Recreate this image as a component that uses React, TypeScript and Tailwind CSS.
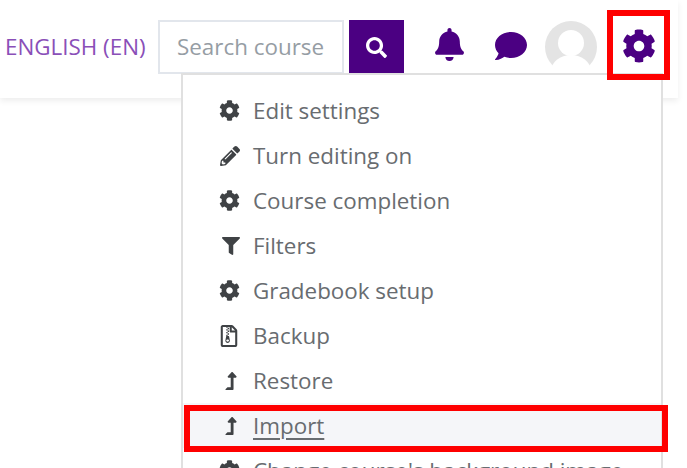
import React from "react";
import { FaBell, FaCog, FaComment, FaFilter, FaLevelUpAlt, FaPencilAlt, FaRegFileArchive, FaSearch } from "react-icons/fa";

const items = [
  { label: "Edit settings", icon: <FaCog size={21} /> },
  { label: "Turn editing on", icon: <FaPencilAlt size={20} /> },
  { label: "Course completion", icon: <FaCog size={21} /> },
  { label: "Filters", icon: <FaFilter size={18} /> },
  { label: "Gradebook setup", icon: <FaCog size={21} /> },
  { label: "Backup", icon: <FaRegFileArchive size={22} /> },
  { label: "Restore", icon: <FaLevelUpAlt size={18} /> },
  { label: "Import", icon: <FaLevelUpAlt size={18} />, active: true },
  { label: "Change course's background image", icon: <FaCog size={21} /> },
];

export default function App() {
  return (
    <div className="relative h-[468px] w-[687px] overflow-hidden bg-white font-['Open_Sans',sans-serif]">
      {/* Top bar */}
      <header className="flex h-[98px] w-[678px] items-start bg-white pt-5 shadow-[0_3px_6px_rgba(0,0,0,0.07)]">
        <span className="ml-[5px] mt-[10px] w-[141px] text-[22.4px] leading-[34px] whitespace-nowrap text-[#8a4fb8]">ENGLISH (EN)</span>
        <div className="ml-[12px] flex h-[54px] w-[186px] items-center border-2 border-[#e2e6ec] bg-white pl-[17px] text-[22.4px] whitespace-nowrap text-[#969da4]">
          Search course
        </div>
        <button type="button" className="ml-[5px] flex h-[54px] w-[55px] items-center justify-center bg-[#4b0082] text-white">
          <FaSearch size={21} />
        </button>
        <div className="ml-[29px] mt-[8px] text-[#4b0082]">
          <FaBell size={33} />
        </div>
        <div className="ml-[29px] mt-[10px] text-[#4b0082]">
          <FaComment size={32} />
        </div>
        <svg width="52" height="52" viewBox="0 0 52 52" className="ml-[18px] mt-[1px]">
          <circle cx="26" cy="26" r="26" fill="#e4e4e4" />
          <circle cx="26" cy="22" r="13" fill="#fff" />
          <ellipse cx="26" cy="50" rx="20" ry="16" fill="#fff" />
        </svg>
        <div className="ml-[25px] mt-[9px] text-[#4b0082]">
          <FaCog size={34} />
        </div>
      </header>

      {/* Dropdown menu */}
      <div className="absolute left-[181px] top-[73px] h-[420px] w-[482px] border-2 border-[#e0e0e0] bg-white pt-[13px]">
        {items.map((item) => (
          <div
            key={item.label}
            className={`flex h-[45px] items-center text-[22.4px] whitespace-nowrap text-[#686c70] ${item.active ? "bg-[#f5f6f9]" : ""}`}
          >
            <span className="flex w-[70px] shrink-0 justify-end pr-[13px] text-[#3f4245]">{item.icon}</span>
            <span className={item.active ? "underline underline-offset-4" : ""}>{item.label}</span>
          </div>
        ))}
      </div>

      {/* Red highlights */}
      <div className="absolute left-[607px] top-[10px] h-[70px] w-[63px] border-[6px] border-[#fe0000]" />
      <div className="absolute left-[184px] top-[405px] h-[47px] w-[484px] border-[6px] border-[#fe0000]" />
    </div>
  );
}
